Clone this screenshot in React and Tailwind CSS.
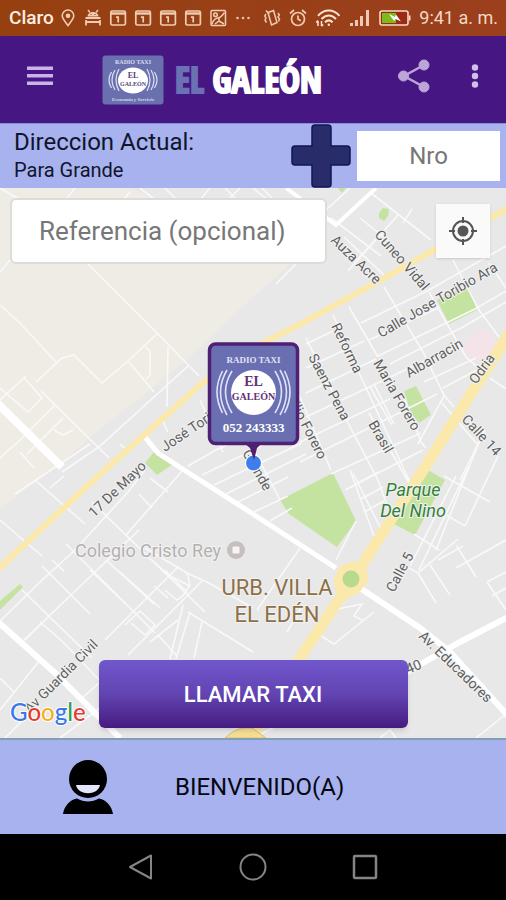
import React, { useState } from 'react';

function CalendarIcon() {
  return (
    <svg viewBox="0 0 18 18" className="h-[18px] w-[18px]" fill="none" stroke="#f0cdb2">
      <rect x="1.8" y="2" width="14.6" height="14" rx="1.5" strokeWidth="1.7" />
      <path d="M2 4.5h14" strokeWidth="2.4" />
      <path d="M7 8.2h2.2v5.3" strokeWidth="1.7" />
    </svg>
  );
}

function StatusBar() {
  return (
    <div className="flex h-9 items-center bg-linear-to-r from-[#964010] to-[#9b3f1d] pr-2 pl-[9px] text-[#f3d9c6]">
      <span className="w-[50px] text-[19px] font-medium text-[#fdeee2]">Claro</span>
      <div className="flex items-center gap-[7px]">
        <svg viewBox="0 0 18 18" className="h-[18px] w-[18px]" fill="none" stroke="#f0cdb2" strokeWidth="1.6">
          <path d="M9 16.6C6 12.6 3.2 9.6 3.2 6.8a5.8 5.8 0 0 1 11.6 0c0 2.8-2.8 5.8-5.8 9.8z" />
          <circle cx="9" cy="6.8" r="1.5" fill="#f0cdb2" />
        </svg>
        <svg viewBox="0 0 18 18" className="h-[18px] w-[18px]" fill="none" stroke="#f0cdb2" strokeWidth="1.8">
          <path d="M4 1l2 2.5M14 1l-2 2.5" strokeWidth="1.4" />
          <path d="M3.5 7.5C4 1.5 14 1.5 14.5 7.5z" fill="#f0cdb2" stroke="none" />
          <path d="M1.5 9h15M1.5 13h15M2 11v5.5M16 11v5.5" />
          <path d="M6.5 5.5h1M10.5 5.5h1" stroke="#964010" strokeWidth="1.2" />
        </svg>
        <CalendarIcon />
        <CalendarIcon />
        <CalendarIcon />
        <CalendarIcon />
        <svg viewBox="0 0 18 18" className="h-[18px] w-[18px]" fill="none" stroke="#f0cdb2" strokeWidth="1.5">
          <rect x="2" y="1.5" width="14.5" height="15" rx="1" />
          <circle cx="6.5" cy="5.8" r="1.8" />
          <path d="M3 15c1-4 4-6 6-6s4-2 6.5-5.5M6 15l4-3 5 3M10 9v3" />
        </svg>
        <svg viewBox="0 0 18 18" className="h-[18px] w-[18px]" fill="#e9c0a2">
          <circle cx="3.5" cy="9" r="1.3" />
          <circle cx="9" cy="9" r="1.3" />
          <circle cx="14.5" cy="9" r="1.3" />
        </svg>
      </div>
      <div className="ml-auto flex items-center gap-2">
        <svg viewBox="0 0 18 18" className="h-[18px] w-[18px]" fill="none" stroke="#f0cdb2" strokeWidth="1.5">
          <path d="M5 3.5l5.5-2 3.5 12-5.5 2.5z" />
          <path d="M3 5L1.8 7 3 9l-1 2 1.5 2.5M15 4l1.3 2-1.3 2 1.5 2-1 2.5M3 1.5l3 3.5" />
        </svg>
        <svg viewBox="0 0 18 18" className="h-[18px] w-[18px]" fill="none" stroke="#f0cdb2" strokeWidth="1.7">
          <circle cx="9" cy="10" r="6.5" />
          <path d="M9 6.5V10l2.8 1.8M1 4.5L5 1M17 4.5L13 1" />
        </svg>
        <svg viewBox="0 0 26 18" className="h-[18px] w-[26px]" fill="none" stroke="#fbe3d2" strokeWidth="2">
          <path d="M3 6.8c6-7 15.5-7 21.5 0M6.5 10c4.5-4.8 10.2-4.8 14.5 0M10 13.2c2.5-2.4 5.2-2.4 7.6 0" />
          <circle cx="13.8" cy="15.8" r="1.2" fill="#fbe3d2" stroke="none" />
          <path d="M3 17v-5M1.3 13.5L3 11.5M6.5 12v5M8.2 15.5L6.5 17.3" strokeWidth="1.5" />
        </svg>
        <svg viewBox="0 0 22 18" className="h-[18px] w-[22px]" fill="#efc9b4">
          <rect x="1" y="14" width="3" height="3" />
          <rect x="6" y="11" width="3" height="6" />
          <rect x="11" y="7" width="3" height="10" />
          <rect x="17" y="1" width="3" height="16" />
        </svg>
        <svg viewBox="0 0 32 18" className="h-[18px] w-8">
          <rect x="1" y="2" width="28" height="14" rx="2" fill="#9a2a14" stroke="#f6dcc9" strokeWidth="1.6" />
          <rect x="3" y="4" width="14" height="10" fill="#7fba1b" />
          <path d="M30 6.5h1.5v5H30z" fill="#f6dcc9" />
          <path d="M10 5l6 3 1-2.5 5 7-5.5-2.5-1.5 2z" fill="#fff" />
        </svg>
        <span className="text-lg whitespace-nowrap">9:41 a. m.</span>
      </div>
    </div>
  );
}

function Logo() {
  return (
    <svg viewBox="0 0 62 50" className="h-[50px] w-[62px]" fontFamily="'Liberation Serif', serif" textAnchor="middle">
      <rect x="0.5" y="0.5" width="61" height="49" rx="3" fill="#6a70ad" />
      <text x="31" y="9" fontSize="6" fontWeight="700" fill="#d9dcf3">RADIO TAXI</text>
      <g fill="none" stroke="#d9dcf3" strokeWidth="1.3">
        <path d="M17 14q-6 11 0 22M13 15q-6 10 0 20M9.5 17q-5 8 0 16" />
        <path d="M45 14q6 11 0 22M49 15q6 10 0 20M52.5 17q5 8 0 16" />
      </g>
      <ellipse cx="31" cy="25.5" rx="15" ry="13" fill="#fff" />
      <text x="31" y="23" fontSize="8" fontWeight="700" fill="#50437b">EL</text>
      <text x="31" y="31" fontSize="6" fontWeight="700" fill="#50437b">GALEÓN</text>
      <text x="31" y="46" fontSize="5" fontStyle="italic" fontWeight="700" fill="#d9dcf3">Economía y Servicio</text>
    </svg>
  );
}

function Header() {
  return (
    <header className="flex h-[87px] items-center bg-[#461782] pb-2">
      <button aria-label="Menu" className="ml-[26px]">
        <svg viewBox="0 0 28 20" className="h-5 w-7" fill="#cbb5e8">
          <rect x="1" y="0.5" width="26" height="3.5" />
          <rect x="1" y="8" width="26" height="3.5" />
          <rect x="1" y="15.5" width="26" height="3.5" />
        </svg>
      </button>
      <div className="mt-2 ml-[48px] flex items-center gap-[11px]">
        <Logo />
        <h1 className="font-['Open_Sans_Condensed','Roboto_Condensed',sans-serif] text-[35px] leading-10 font-bold whitespace-nowrap text-white [-webkit-text-stroke:2px_currentColor]">
          <span className="text-[#6a72b4]">EL</span> GALEÓN
        </h1>
      </div>
      <button aria-label="Compartir" className="ml-auto">
        <svg viewBox="0 0 34 34" className="h-[34px] w-[34px]" fill="#bda5da" stroke="#bda5da">
          <path d="M27 6L7 17l20 11" fill="none" strokeWidth="2.5" />
          <circle cx="27" cy="6" r="5" />
          <circle cx="6.5" cy="17" r="5" />
          <circle cx="27" cy="28" r="5" />
        </svg>
      </button>
      <button aria-label="Opciones" className="mr-[21px] ml-[34px]">
        <svg viewBox="0 0 20 26" className="h-[26px] w-5" fill="#d3c0ea">
          <circle cx="10" cy="4.5" r="3.2" />
          <circle cx="10" cy="13" r="3.2" />
          <circle cx="10" cy="21.5" r="3.2" />
        </svg>
      </button>
    </header>
  );
}

function AddressBar() {
  const [number, setNumber] = useState('');

  return (
    <div className="flex h-[65px] items-center border-t border-[#8b8bd6] bg-[#a7b2ee] pr-1.5">
      <div className="min-w-0 flex-1 pb-1 pl-[14px] text-[#10152c]">
        <p className="text-2xl leading-8">Direccion Actual:</p>
        <p className="text-xl leading-6">Para Grande</p>
      </div>
      <button aria-label="Agregar" className="mr-1.5">
        <svg viewBox="0 0 60 64" className="h-16 w-[60px]">
          <path
            d="M24 1h13q3 0 3 3v18h16q3 0 3 3v13q0 3-3 3H40v19q0 3-3 3H24q-3 0-3-3V41H4q-3 0-3-3V25q0-3 3-3h17V4q0-3 3-3z"
            fill="#282c69"
            stroke="#12145a"
            strokeWidth="1.5"
          />
        </svg>
      </button>
      <input
        aria-label="Nro"
        placeholder="Nro"
        value={number}
        onChange={(e) => setNumber(e.target.value)}
        className="h-[50px] w-[143px] bg-white text-center text-2xl text-[#555] placeholder:text-[#777]"
      />
    </div>
  );
}

const labels = [
  { text: 'Auza Acre', x: 330, y: 241, angle: 44 },
  { text: 'Cuneo Vidal', x: 374, y: 235, angle: 49 },
  { text: 'Calle Jose Toribio Ara', x: 381, y: 338, angle: -30 },
  { text: 'Albarracin', x: 409, y: 378, angle: -30 },
  { text: 'Odria', x: 476, y: 385, angle: -54 },
  { text: 'Reforma', x: 331, y: 326, angle: 64 },
  { text: 'Maria Forero', x: 373, y: 363, angle: 60 },
  { text: 'Saenz Pena', x: 308, y: 357, angle: 62 },
  { text: 'Basilio Forero', x: 280, y: 384, angle: 63 },
  { text: 'Brasil', x: 368, y: 424, angle: 60 },
  { text: 'Calle 14', x: 461, y: 420, angle: 47 },
  { text: 'José Toribio Ara', x: 165, y: 452, angle: -34 },
  { text: '17 De Mayo', x: 94, y: 518, angle: -44 },
  { text: 'Grande', x: 242, y: 453, angle: 60 },
  { text: 'Calle 5', x: 394, y: 593, angle: -62 },
  { text: 'Av. Educadores', x: 418, y: 637, angle: 44 },
  { text: '40', x: 408, y: 674, angle: -22 },
  { text: 'Av Guardia Civil', x: 30, y: 714, angle: -45 },
];

function Pin() {
  return (
    <g fontFamily="'Liberation Serif', serif" fontWeight="700" textAnchor="middle">
      <circle cx="253.5" cy="463" r="8.5" fill="#fff" />
      <circle cx="253.5" cy="463" r="7.5" fill="#3d7eeb" />
      <path d="M244 443h18l-5 5-3 12-4-12z" fill="#512071" />
      <rect x="209.5" y="344" width="88" height="99.5" rx="6" fill="#696fb0" stroke="#4e2076" strokeWidth="3.5" />
      <text x="253.5" y="363" fontSize="9" fill="#e0e2f5">RADIO TAXI</text>
      <g fill="none" stroke="#dfe2f8" strokeWidth="1.6">
        <path d="M232 371q-13 21 0 42M227 370q-13 22 0 45M222.5 371q-11 21 0 42" />
        <path d="M275 371q13 21 0 42M280 370q13 22 0 45M284.5 371q11 21 0 42" />
      </g>
      <circle cx="253.5" cy="392.5" r="22.5" fill="#fff" />
      <text x="253.5" y="386" fontSize="14" fill="#613078">EL</text>
      <text x="253.5" y="400" fontSize="10" fill="#613078">GALEÓN</text>
      <text x="253.5" y="432" fontSize="13" fill="#fff">052 243333</text>
    </g>
  );
}

function CityMap() {
  return (
    <svg
      viewBox="0 188 506 550"
      preserveAspectRatio="xMidYMid slice"
      className="col-start-1 row-start-1 h-full min-h-[550px] w-full"
      fontFamily="Roboto, sans-serif"
    >
      <rect x="-500" y="188" width="1506" height="550" fill="#e8e8e8" />
      <path d="M0 188h130l100 40 60 36-50 45-40 39-50 42-50 39-40 35-60 44z" fill="#efece5" />

      <g fill="#c5e3a0">
        <path d="M437 300l31-14 9 24-28 14z" />
        <path d="M404 391l12-5 15 29-12 8-8-10z" />
        <path d="M145 463l9-11 19 12-16 11z" />
        <path d="M280 500l53-27 23 48-19 26-48-33z" />
        <path d="M428 470l17 10-30 55-23-12z" />
        <path d="M0 601l20-17 3 3-23 23z" />
        <path d="M379 213l4-5 6 1-1 7-4 5-5-3zM338 188h8l-4 5z" />
      </g>
      <path d="M464 345l3-6 18-11 12 14-11 20-18-4z" fill="#f4e3e8" />

      {/* streets north of the main road */}
      <g fill="none" stroke="#f9f9f9" strokeWidth="1.6">
        <path d="M0 188l24 14M75 188l-8 10M130 192l-10 12M140 188l18 14M165 188l12 12M210 188l-10 12M225 188l14 14M240 188l-12 12M0 272l10-12M88 264l10 10M94 270l63 63 42 43" />
        <path d="M0 305l20 18 36 39M36 382l26-24 12-3 28 28 26-22 29-27M129 362l25 30M145 347l5 4v24l-4 4M168 347l-1 60M62 472l38-26 88-80M41 391l68 67M24 378l18 20-14 14-28-24M0 400l26-24M55 405L20 440l-20 18M20 452l14 16M54 430l9 5 10-5M63 418l-36 36M90 444l-75 50" />
        <path d="M162 420l6 12M129 452l-9-8M253 188l20 16M262 188l10 10M350 188l-24 22M331 218l50 38M371 193l60 47M398 215l-50 56M377 238l-20 22M344 237l42 40M360 218l30 24M412 209l-9 14M298 262l-22 22" />
      </g>

      {/* east grid */}
      <g fill="none" stroke="#f9f9f9" strokeWidth="1.6">
        <path d="M384 287l39 65 21 43 10 12M349 307l29 50M333 315l27 60 49 105 6 12M306 338l42 85 30 57 10 28M299 395l32 75M453 260l26 50 20 27M489 263l17 25M429 292l37 65 10 9M370 387l22 38M374 384l20 40M405 400l16 42 5 6M369 413l40 70" />
        <path d="M361 323l68-33 77-44M369 340l71-33M378 356l97-47 31-18M390 364l73-37 43-25M424 382l52-24M443 388l34-18M306 344l27-13M306 368l58-27M306 393l70-34M306 417l118-56M300 442l90-43M300 462l97-48 40-20M331 474l90-41M345 490l78-40M444 396l-26 48M442 403l36 42M490 378l16 11" />
        <path d="M188 466l28-16 30-14M202 475l98-48M214 485l88-42M226 494l80-40M238 502l50-25M254 512l34-16M270 521l22-13M209 420l14 32M252 446l28 54M200 400l20 46" />
        <path d="M300 548l-43 62M336 560l20-39M338 609l24-5-8 12 8 4M320 635l14 9 40-32M287 632l16-27M350 470l24 66M356 484l22-12M361 499l22-12M364 512l20-11M353 473l30 60" />
      </g>

      {/* south-west grid */}
      <g fill="none" stroke="#f9f9f9" strokeWidth="1.6">
        <path d="M35 480l50 44M0 520l42 36M50 488l14-12M145 470l-17 22-54 59-35 32-39 38M183 470l-57 65M139 494l13 14M92 502l113 110M66 544l60 60M52 560l12 11M150 478l18 14M22 590l70 68M24 640l115-110M42 566l48 48M40 622l22 19 40 42M25 640l30-30M90 570l40 38 25 25M106 560l48 44M120 572l40 36M140 550l30 26 20 10" />
        <path d="M145 548l42 25 22 10 44 25M105 640l74-74M128 655l75-75M154 586l14 12M165 570l22 22-10 8-12-10M187 573l3 12-8 12M183 605l-13 54M190 612l-14 47M202 622l-8 36M188 612l65 40M150 642l28-22M158 635l18 20M125 625l15-14 15 14-10 10-14-12" />
        <path d="M0 678l15 15M0 710l40-50M80 700l20-18M5 738l30-30M60 738l40-30" />
      </g>

      {/* south-east streets */}
      <g fill="none" stroke="#f9f9f9" strokeWidth="1.6">
        <path d="M444 476l46 26M456 476l-46 90M469 466l-50 104M480 440l-44 110M465 526l-24-14M465 526l33-70M414 534l25 16M409 568l9 5 40-34M418 573l18 30M430 565l20 30M456 545l20 32M438 560l25-14M487 582l19 28M506 540l-50 28M485 430l-25 50M487 582l19-10M492 596l14-8" />
        <path d="M476 738l30-24M253 738l20-10M380 738l10-8 6 8" />
      </g>

      {/* avenues */}
      <g fill="none" stroke="#fff">
        <path d="M-4 402l66 65" strokeWidth="8" />
        <path d="M-4 620l59 53 65 65" strokeWidth="6" />
        <path d="M145 437l13 16 23 15 72 46 83 54" strokeWidth="5" />
        <path d="M360 588l60 40 30 24 60 66" strokeWidth="6" />
        <path d="M400 676l60-34 50-26" strokeWidth="6" />
        <path d="M286 188l50 37 40-37" strokeWidth="4" />
      </g>
      <g fill="none" stroke="#fbe9ac">
        <path d="M510 207l-120 68-84 46-51 26-55 38-95 85-23 21-86 80" strokeWidth="6" strokeLinejoin="round" />
        <path d="M510 332l-92 146-58 90-60 90-50 84" strokeWidth="11" />
      </g>
      <path d="M340 566l14-5 13 8 1 12-9 12-14 6-10-9-1-13z" fill="#fbe9ac" />
      <circle cx="351" cy="579" r="8.5" fill="#b7da8e" />
      <path d="M225 738q12-12 27-10l14 10z" fill="#f6df94" stroke="#d8bd77" />

      <g fill="#5f5f5f" fontSize="14" stroke="#f2f2f2" strokeWidth="2" paintOrder="stroke">
        {labels.map((label) => (
          <text key={label.text} transform={`translate(${label.x} ${label.y}) rotate(${label.angle})`}>
            {label.text}
          </text>
        ))}
      </g>

      <g stroke="#f2f2f2" strokeWidth="2" paintOrder="stroke">
        <text x="75" y="557" fontSize="18" fill="#b5b0b0">Colegio Cristo Rey</text>
        <g fontSize="22" fill="#8d7048" textAnchor="middle">
          <text x="277" y="595">URB. VILLA</text>
          <text x="277" y="622">EL EDÉN</text>
        </g>
        <g fontSize="18" fontStyle="italic" fill="#33803a" textAnchor="middle">
          <text x="413" y="496">Parque</text>
          <text x="413" y="517">Del Nino</text>
        </g>
      </g>
      <circle cx="236" cy="550" r="9" fill="#c6bfbf" />
      <rect x="232.5" y="546.5" width="7" height="7" rx="1" fill="#f7f4f4" />

      <Pin />

      <text x="10" y="721" fontSize="24" fontFamily="Lato, sans-serif" fontWeight="500" stroke="#fff" strokeWidth="2" paintOrder="stroke">
        <tspan fill="#3b78e7">G</tspan>
        <tspan fill="#e23c2e">o</tspan>
        <tspan fill="#f2b21c">o</tspan>
        <tspan fill="#3b78e7">g</tspan>
        <tspan fill="#2f9e4f">l</tspan>
        <tspan fill="#e23c2e">e</tspan>
      </text>
    </svg>
  );
}

function MapSection() {
  const [reference, setReference] = useState('');

  return (
    <main className="grid flex-1">
      <CityMap />
      <div className="z-10 col-start-1 row-start-1 flex flex-col justify-between px-2.5 py-2.5">
        <div className="flex items-center justify-between pr-1.5">
          <input
            aria-label="Referencia (opcional)"
            placeholder="Referencia (opcional)"
            value={reference}
            onChange={(e) => setReference(e.target.value)}
            className="h-[66px] w-[66%] rounded-md border-2 border-[#dcdcda] bg-white px-[27px] text-[26px] text-[#555] placeholder:text-[#777]"
          />
          <button aria-label="Mi ubicación" className="flex h-[54px] w-[54px] items-center justify-center bg-[#fafafa] shadow">
            <svg viewBox="0 0 30 30" className="h-[30px] w-[30px]" fill="none" stroke="#555" strokeWidth="2">
              <circle cx="15" cy="15" r="10" />
              <circle cx="15" cy="15" r="5.5" fill="#555" stroke="none" />
              <path d="M15 1v6M15 23v6M1 15h6M23 15h6" />
            </svg>
          </button>
        </div>
        <button className="h-[68px] w-[309px] self-center rounded-md bg-linear-to-b from-[#7157cd] via-[#6244b2] to-[#461a80] text-[22px] font-medium text-white shadow-md">
          LLAMAR TAXI
        </button>
      </div>
    </main>
  );
}

function Footer() {
  return (
    <footer className="flex h-24 items-center border-t-2 border-[#829fb8] bg-[#a7b2ee] pl-[62px]">
      <svg viewBox="0 0 52 56" className="h-14 w-[52px]">
        <circle cx="26" cy="20" r="19" />
        <path d="M14 26h24c-2 11-22 11-24 0z" fill="#e4e7fc" />
        <path d="M1 55c1-7 6-14 14-15.5 7 4 15 4 22 0C45 41 50 48 51 55z" />
      </svg>
      <p className="ml-[61px] text-2xl text-[#05070f]">BIENVENIDO(A)</p>
    </footer>
  );
}

function NavBar() {
  return (
    <nav className="flex h-[66px] items-center justify-center gap-[84px] bg-black">
      <button aria-label="Atrás">
        <svg viewBox="0 0 28 28" className="h-7 w-7" fill="none" stroke="#858585" strokeWidth="2" strokeLinejoin="round">
          <path d="M3 14L24 2.5v23z" />
        </svg>
      </button>
      <button aria-label="Inicio">
        <svg viewBox="0 0 28 28" className="h-7 w-7" fill="none" stroke="#858585" strokeWidth="2">
          <circle cx="14" cy="14" r="12.5" />
        </svg>
      </button>
      <button aria-label="Recientes">
        <svg viewBox="0 0 28 28" className="h-7 w-7" fill="none" stroke="#858585" strokeWidth="2.5">
          <rect x="3" y="3" width="22" height="22" rx="1" />
        </svg>
      </button>
    </nav>
  );
}

function App() {
  return (
    <div className="flex min-h-screen flex-col bg-black font-[Roboto,sans-serif]">
      <StatusBar />
      <Header />
      <AddressBar />
      <MapSection />
      <Footer />
      <NavBar />
    </div>
  );
}

export default App;
